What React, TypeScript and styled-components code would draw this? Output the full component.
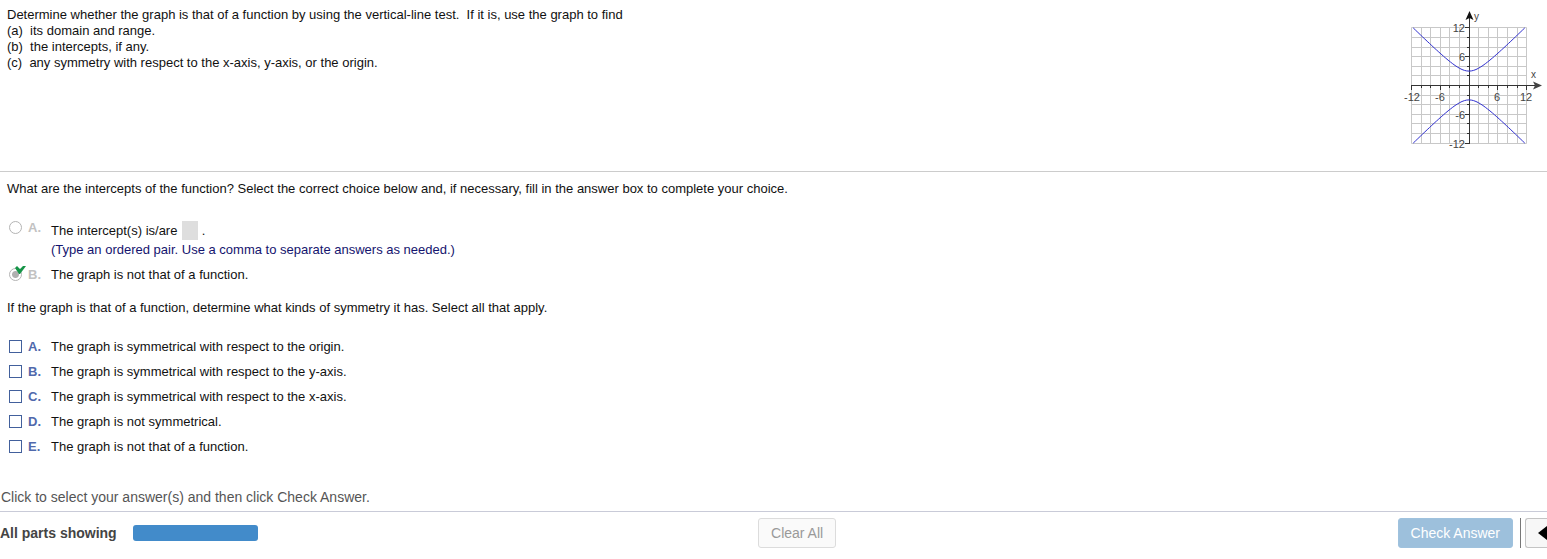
import React from "react";
import styled, { createGlobalStyle } from "styled-components";

const GlobalStyle = createGlobalStyle`
  * { box-sizing: border-box; }
  body {
    margin: 0;
    background: #fff;
    color: #111;
    font: 13px/20px "Liberation Sans", Arial, sans-serif;
    overflow-x: hidden;
  }
`;

const Prompt = styled.header`
  display: flex;
  justify-content: space-between;
  align-items: flex-start;
  min-height: 172px;
  padding: 7px 4px 20px 7px;
  border-bottom: 1px solid #ccc;
`;

const PromptText = styled.div`
  line-height: 16px;
  white-space: pre-wrap;
`;

const PromptLine = styled.p`
  margin: 0;
`;

const Graph = styled.svg`
  flex: none;
  display: block;
  font-family: "Liberation Sans", Arial, sans-serif;
`;

const Work = styled.main`
  padding: 7px 7px 0;
`;

const Group = styled.fieldset`
  margin: 0;
  padding: 0;
  border: 0;
  min-width: 0;
`;

const Question = styled.legend<{ $gap: number }>`
  display: block;
  padding: 0;
  margin-bottom: ${(p) => p.$gap}px;
`;

const RadioList = styled.div`
  display: flex;
  flex-direction: column;
  gap: 6px;
  margin-bottom: 14px;
`;

const Choice = styled.div<{ $row?: number }>`
  display: grid;
  grid-template-columns: 19px 23px 1fr;
  padding-left: 2px;
  line-height: ${(p) => p.$row ?? 19}px;
  align-items: ${(p) => (p.$row ? "center" : "start")};
`;

const Letter = styled.label<{ $muted?: boolean }>`
  font-size: 13px;
  font-weight: bold;
  color: ${(p) => (p.$muted ? "#c2c2c2" : "#5069ac")};
`;

const RaisedLetter = styled(Letter)`
  line-height: 14px;
`;

const Marker = styled.span`
  position: relative;
  display: flex;
  width: 13px;
`;

const Radio = styled.input`
  appearance: none;
  width: 13px;
  height: 13px;
  margin: 0;
  border: 1px solid #b4b4b4;
  border-radius: 50%;
  background: #fff;
  &:checked {
    background: radial-gradient(circle, #b0b0b0 0 3px, #fff 4px);
  }
`;

const Tick = styled.svg`
  position: absolute;
  left: 5px;
  top: -3px;
`;

const Checkbox = styled.input`
  appearance: none;
  width: 13px;
  height: 13px;
  margin: 0;
  border: 1px solid #42609c;
  background: #fff;
  &:checked {
    background: #42609c;
  }
`;

const Blank = styled.input`
  width: 16px;
  height: 19px;
  margin: 0 0 0 1px;
  padding: 0;
  border: 0;
  vertical-align: top;
  background: #dedede;
`;

const Hint = styled.div`
  color: #14146e;
`;

const Status = styled.p`
  margin: 28px 0 0;
  padding: 0 1px 4px;
  font-size: 14px;
  color: #555;
`;

const Footer = styled.footer`
  display: grid;
  grid-template-columns: 49% auto 1fr;
  align-items: start;
  padding: 6px 0 10px;
  border-top: 1px solid #c9cbd8;
`;

const Progress = styled.div`
  display: flex;
  align-items: center;
  gap: 16px;
  height: 30px;
  color: #444;
  font-size: 14px;
  font-weight: bold;
`;

const Bar = styled.div`
  width: 125px;
  height: 16px;
  border-radius: 3px;
  background: #428bca;
`;

const Actions = styled.div`
  display: flex;
  justify-content: flex-end;
`;

const Button = styled.button<{ $primary?: boolean }>`
  height: 30px;
  padding: 0 12px;
  border: 1px solid ${(p) => (p.$primary ? "#9fc2de" : "#dcdcdc")};
  border-radius: 3px;
  background: ${(p) => (p.$primary ? "#9dc0dc" : "#fafafa")};
  color: ${(p) => (p.$primary ? "#fff" : "#999")};
  font: 14px/20px "Liberation Sans", Arial, sans-serif;
  white-space: nowrap;
`;

const Divider = styled.div`
  width: 1px;
  margin: 0 4px 0 7px;
  background: #777;
`;

const PrevButton = styled.button`
  display: flex;
  align-items: center;
  justify-content: flex-end;
  width: 22px;
  height: 30px;
  padding: 0;
  border: 1px solid #c4c4c4;
  border-right: 0;
  border-radius: 3px 0 0 3px;
  background: #f7f7f7;
`;

const CX = 66;
const CY = 78.5;
const UNIT = 4.8;
const px = (x: number) => CX + x * UNIT;
const py = (y: number) => CY - y * UNIT;
const snap = (v: number) => Math.floor(v) + 0.5;
const STEPS = Array.from({ length: 13 }, (_, i) => -12 + i * 2);

// One branch of y² − x² = 9.
const branch = (sign: number) => {
  const edge = Math.sqrt(135);
  return Array.from({ length: 49 }, (_, i) => {
    const x = -edge + (i * 2 * edge) / 48;
    return `${px(x).toFixed(2)},${py(sign * Math.sqrt(9 + x * x)).toFixed(2)}`;
  }).join(" ");
};

function HyperbolaGraph() {
  const top = snap(py(12));
  const bottom = snap(py(-12));
  const left = snap(px(-12));
  const right = snap(px(12));
  return (
    <Graph width="140" height="144" viewBox="0 0 140 144" role="img" aria-label="Graph of a hyperbola">
      <g stroke="#c8c8c8">
        {STEPS.map((s) => (
          <React.Fragment key={s}>
            <line x1={snap(px(s))} x2={snap(px(s))} y1={top} y2={bottom} />
            <line y1={snap(py(s))} y2={snap(py(s))} x1={left} x2={right} />
          </React.Fragment>
        ))}
      </g>
      <g stroke="#333">
        <line x1={left} x2="134" y1="78.5" y2="78.5" />
        <line x1="66.5" x2="66.5" y1="10" y2={bottom} />
        {STEPS.map((s) => {
          const r = s % 6 === 0 ? 5 : 3;
          return (
            <React.Fragment key={s}>
              <line x1={snap(px(s))} x2={snap(px(s))} y1="78" y2={78 + r} />
              <line y1={snap(py(s))} y2={snap(py(s))} x1={67 - r} x2="67" />
            </React.Fragment>
          );
        })}
      </g>
      <path d="M66.5 4 L70.5 13 L66.5 11 L62.5 13 Z" fill="#111" />
      <path d="M139 78.5 L130 74.5 L132 78.5 L130 82.5 Z" fill="#444" />
      <g fill="none" stroke="#3030d0">
        <polyline points={branch(1)} />
        <polyline points={branch(-1)} />
      </g>
      <g fill="#444" fontSize="11">
        <text x="62" y="25" textAnchor="end">12</text>
        <text x="62" y="54" textAnchor="end">6</text>
        <text x="62" y="112" textAnchor="end">-6</text>
        <text x="62" y="141" textAnchor="end">-12</text>
        <text x="9" y="94" textAnchor="middle">-12</text>
        <text x="37" y="94" textAnchor="middle">-6</text>
        <text x="94" y="94" textAnchor="middle">6</text>
        <text x="123" y="94" textAnchor="middle">12</text>
        <text x="71" y="13" fontSize="10">y</text>
        <text x="128" y="71" fontSize="10">x</text>
      </g>
    </Graph>
  );
}

const SYMMETRY = [
  "The graph is symmetrical with respect to the origin.",
  "The graph is symmetrical with respect to the y-axis.",
  "The graph is symmetrical with respect to the x-axis.",
  "The graph is not symmetrical.",
  "The graph is not that of a function.",
];

export default function App() {
  return (
    <>
      <GlobalStyle />
      <Prompt>
        <PromptText>
          <PromptLine>
            {"Determine whether the graph is that of a function by using the vertical-line test.  If it is, use the graph to find"}
          </PromptLine>
          <PromptLine>{"(a)  its domain and range."}</PromptLine>
          <PromptLine>{"(b)  the intercepts, if any."}</PromptLine>
          <PromptLine>{"(c)  any symmetry with respect to the x-axis, y-axis, or the origin."}</PromptLine>
        </PromptText>
        <HyperbolaGraph />
      </Prompt>

      <Work>
        <Group>
          <Question $gap={22}>
            What are the intercepts of the function? Select the correct choice below and, if necessary, fill in the
            answer box to complete your choice.
          </Question>
          <RadioList>
            <Choice>
              <Marker>
                <Radio type="radio" name="intercepts" id="int-a" disabled />
              </Marker>
              <RaisedLetter $muted htmlFor="int-a">A.</RaisedLetter>
              <div>
                <div>
                  The intercept(s) is/are <Blank aria-label="Intercepts" disabled />
                  {" ."}
                </div>
                <Hint>(Type an ordered pair. Use a comma to separate answers as needed.)</Hint>
              </div>
            </Choice>
            <Choice $row={19}>
              <Marker>
                <Radio type="radio" name="intercepts" id="int-b" defaultChecked disabled />
                <Tick width="12" height="11" viewBox="0 0 12 11" aria-hidden="true">
                  <path d="M1 3 L3 1 L6 4 L9 1 L12 1 L6 9 L5 9 Z" fill="#159447" />
                </Tick>
              </Marker>
              <Letter $muted htmlFor="int-b">B.</Letter>
              <label htmlFor="int-b">The graph is not that of a function.</label>
            </Choice>
          </RadioList>
        </Group>

        <Group>
          <Question $gap={16}>
            If the graph is that of a function, determine what kinds of symmetry it has. Select all that apply.
          </Question>
          {SYMMETRY.map((text, i) => (
            <Choice key={text} $row={25}>
              <Checkbox type="checkbox" id={`sym-${i}`} />
              <Letter htmlFor={`sym-${i}`}>{"ABCDE"[i]}.</Letter>
              <label htmlFor={`sym-${i}`}>{text}</label>
            </Choice>
          ))}
        </Group>
      </Work>

      <Status>Click to select your answer(s) and then click Check Answer.</Status>

      <Footer>
        <Progress>
          All parts showing
          <Bar />
        </Progress>
        <Button type="button">Clear All</Button>
        <Actions>
          <Button type="button" $primary>Check Answer</Button>
          <Divider />
          <PrevButton type="button" aria-label="Previous">
            <svg width="9" height="14" viewBox="0 0 9 14" aria-hidden="true">
              <path d="M0 7 L9 0 V14 Z" fill="#000" />
            </svg>
          </PrevButton>
        </Actions>
      </Footer>
    </>
  );
}
